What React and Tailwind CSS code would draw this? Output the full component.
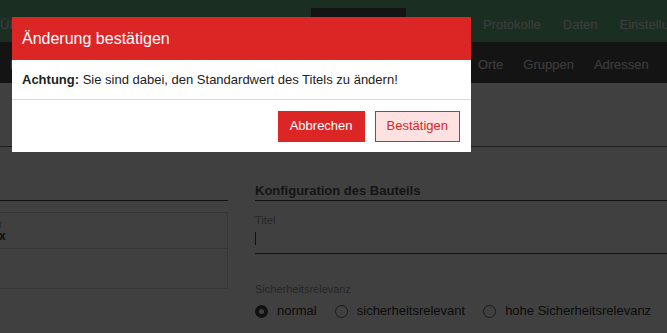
import React from 'react';

const topNav = [
    { label: 'Übersicht', w: 'w-[77px]' },
    { label: 'Anlagen', w: 'w-[110px]' },
    { label: 'Bauteile', w: 'w-[135px]' },
    { label: 'Prüfungen', w: 'w-[95px]', active: true },
    { label: 'Pläne', w: 'w-[66px]' },
];

const subNavHidden = ['Bauteile', 'Typen', 'Hersteller', 'Kategorien'];

const Radio = ({ checked, label }) => (
    <label className="flex items-center gap-[9px] text-[13px] text-[#333] leading-[16px]">
        {checked ? (
            <span className="block w-[13px] h-[13px] rounded-full border-[4px] border-[#444] bg-white" />
        ) : (
            <span className="block w-[13px] h-[13px] rounded-full border border-[#666] bg-white" />
        )}
        <span>{label}</span>
    </label>
);

const App = () => {
    return (
        <div className="relative w-[667px] h-[333px] overflow-hidden bg-white font-['Liberation_Sans',Arial,sans-serif]">
            {/* main navigation */}
            <div className="flex h-[42px] bg-[#68b888] -ml-[11px] text-[13px] text-[#f0f0f0]">
                {topNav.map((item) => (
                    <div key={item.label} className={`${item.w} shrink-0 pt-2`}>
                        <div className={`h-full flex items-center px-[11px] ${item.active ? 'bg-[#505050]' : ''}`}>
                            {item.label}
                        </div>
                    </div>
                ))}
                <div className="pt-2 flex items-center px-[11px] shrink-0">Protokolle</div>
                <div className="pt-2 flex items-center px-[11px] shrink-0">Daten</div>
                <div className="pt-2 flex items-center px-[11px] shrink-0">Einstellungen</div>
            </div>

            {/* sub navigation */}
            <div className="flex h-[41px] bg-[#505050] text-[13px] text-[#f0f0f0]">
                {subNavHidden.map((label) => (
                    <div key={label} className="w-[117px] shrink-0 pt-[5px] flex items-center px-[10px]">
                        {label}
                    </div>
                ))}
                <div className="pt-[5px] flex items-center px-[10px] shrink-0">Orte</div>
                <div className="pt-[5px] flex items-center px-[10px] shrink-0">Gruppen</div>
                <div className="pt-[5px] flex items-center px-[10px] shrink-0">Adressen</div>
            </div>

            {/* page title */}
            <div className="h-[64px] border-b border-[#777] flex items-center px-[30px] text-[20px] text-[#333]">
                Bauteil bearbeiten
            </div>

            {/* content */}
            <div className="flex gap-[27px] -ml-[12px] mt-[36px]">
                <div className="w-[240px] shrink-0">
                    <div className="h-[18px] border-b border-[#444]" />
                    <div className="mt-[11px] border border-[#d8d8d8]">
                        <div className="h-[36px] border-b border-[#d8d8d8] px-[10px] flex flex-col justify-center">
                            <span className="text-[10px] leading-[11px] text-[#999]">r</span>
                            <span className="text-[12px] leading-[13px] font-bold text-[#333]">x</span>
                        </div>
                        <div className="h-[39px]" />
                    </div>
                </div>

                <div className="w-[440px] shrink-0">
                    <div className="text-[13px] font-bold leading-[15px] pb-[2px] border-b border-[#444] text-[#555]">
                        Konfiguration des Bauteils
                    </div>
                    <div className="mt-[13px] text-[11px] leading-[13px] text-[#999]">Titel</div>
                    <div className="h-[22px] border-b border-[#444]">
                        <div className="mt-[5px] w-px h-[13px] bg-[#444]" />
                    </div>
                    <div className="mt-[29px] text-[11px] leading-[13px] text-[#999]">Sicherheitsrelevanz</div>
                    <div className="mt-[7px] flex gap-[18px]">
                        <Radio checked label="normal" />
                        <Radio label="sicherheitsrelevant" />
                        <Radio label="hohe Sicherheitsrelevanz" />
                    </div>
                </div>
            </div>

            {/* backdrop */}
            <div className="absolute inset-0 bg-black/75" />

            {/* dialog */}
            <div className="absolute left-[12px] top-[17px] w-[459px] bg-white">
                <div className="h-[43px] bg-[#dc2626] px-[10px] flex items-center text-[16px] text-white">
                    Änderung bestätigen
                </div>
                <div className="h-[40px] px-[10px] flex items-center text-[13px] text-[#222] border-b border-[#d9d9d9]">
                    <span>
                        <span className="font-bold">Achtung:</span> Sie sind dabei, den Standardwert des Titels zu ändern!
                    </span>
                </div>
                <div className="h-[52px] flex items-center justify-end gap-[10px] pr-[11px]">
                    <button className="h-[31px] px-[12px] bg-[#dc2626] text-white text-[13px]">
                        Abbrechen
                    </button>
                    <button className="h-[31px] px-[11px] bg-[#fee2e2] border border-[#dc2626] text-[#dc2626] text-[13px]">
                        Bestätigen
                    </button>
                </div>
            </div>
        </div>
    );
};

export default App;
